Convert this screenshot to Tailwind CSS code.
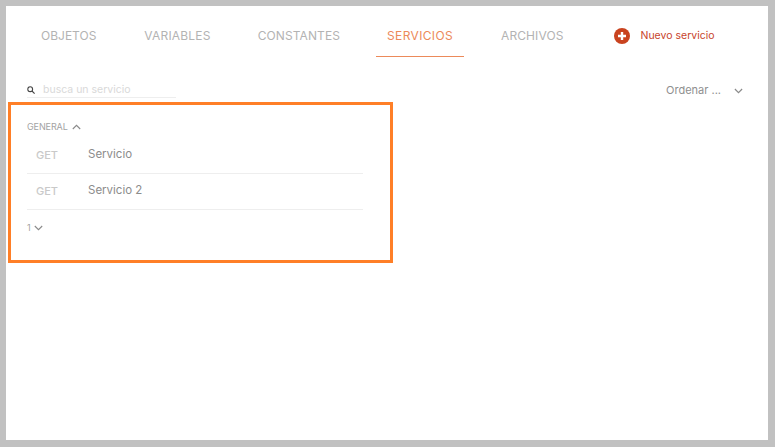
<!DOCTYPE html>
<html><head><meta charset="utf-8"><script src="https://cdn.jsdelivr.net/npm/@tailwindcss/browser@4"></script></head>
<body class="m-0">
<div class="w-[775px] h-[447px] bg-[#c1c1c1] pl-[6px] pt-[6px] pr-[7px] pb-[7px] overflow-hidden font-['Inter',sans-serif]">
<div class="relative w-full h-full bg-white flex flex-col">
  <nav class="h-[51px] flex items-stretch gap-[25px] pl-[24px] text-[12px] text-[#b3b3b3]">
    <a class="pl-[11px] pr-[12px] pt-[8px] flex items-center">OBJETOS</a>
    <a class="px-[11px] pt-[8px] flex items-center tracking-[0.2px]">VARIABLES</a>
    <a class="px-[11px] pt-[8px] flex items-center tracking-[0.1px]">CONSTANTES</a>
    <a class="px-[11px] pt-[9px] flex items-center text-[#ec8a5a] border-b border-[#ec8a5a] tracking-[0.35px]">SERVICIOS</a>
    <a class="pl-[12px] pr-[11px] pt-[8px] flex items-center tracking-[0.1px]">ARCHIVOS</a>
    <a class="ml-[15px] pt-[8px] flex items-center gap-[10px] text-[10.5px] text-[#c8442c]">
      <svg class="w-[16px] h-[16px]" viewBox="0 0 16 16"><circle cx="8" cy="8" r="8" fill="#c9431f"/><path d="M8 4v8M4 8h8" stroke="#fff" stroke-width="2.4"/></svg>
      Nuevo servicio
    </a>
  </nav>
  <div class="flex items-start justify-between mt-[24px] pl-[21px] pr-[25px]">
    <div class="flex items-center gap-[8px] w-[149px] h-[17px] pt-[2px] border-b border-[#eeeeee] text-[10.5px] text-[#d9d9d9]">
      <svg class="w-[8px] h-[8px]" viewBox="0 0 8 8" fill="none" stroke="#444" stroke-width="1.1"><circle cx="3.2" cy="3.2" r="2.4"/><path d="M5 5l2.6 2.6"/></svg>
      <span>busca un servicio</span>
    </div>
    <div class="flex items-center gap-[13px] h-[17px] pt-[2px] text-[11px] text-[#8f8f8f]">
      <span>Ordenar ...</span>
      <svg class="w-[9px] h-[6px]" viewBox="0 0 10 6" fill="none" stroke="#8a8a8a" stroke-width="1.3"><path d="M1 .8l4 4 4-4"/></svg>
    </div>
  </div>
  <section class="mt-[23px] ml-[21px] w-[336px]">
    <div class="flex items-center gap-[4px] h-[12px] text-[9px] tracking-[-0.1px] text-[#a3a3a3]">
      <span>GENERAL</span>
      <svg class="w-[9px] h-[6px]" viewBox="0 0 9 6" fill="none" stroke="#8a8a8a" stroke-width="1.1"><path d="M.8 5l3.7-3.7L8.2 5"/></svg>
    </div>
    <div class="h-[36px] pb-[1px] flex items-center border-b border-[#eeeeee] text-[11px] mt-[5px]">
      <span class="w-[61px] pl-[9px] font-medium text-[#c9c9c9]">GET</span><span class="text-[11.5px] text-[#8c8c8c]">Servicio</span>
    </div>
    <div class="h-[36px] pb-[1px] flex items-center border-b border-[#eeeeee] text-[11px]">
      <span class="w-[61px] pl-[9px] font-medium text-[#c9c9c9]">GET</span><span class="text-[11.5px] text-[#8c8c8c]">Servicio 2</span>
    </div>
    <div class="flex items-center gap-[3px] mt-[12px] h-[12px] text-[9px] text-[#a3a3a3]">
      <span>1</span>
      <svg class="w-[9px] h-[6px]" viewBox="0 0 9 6" fill="none" stroke="#8a8a8a" stroke-width="1.1"><path d="M.8 1l3.7 3.7L8.2 1"/></svg>
    </div>
  </section>
  <div class="absolute left-[2px] top-[96px] w-[385px] h-[161px] border-[3px] border-[#ff7f27]"></div>
</div>
</div>
</body></html>
